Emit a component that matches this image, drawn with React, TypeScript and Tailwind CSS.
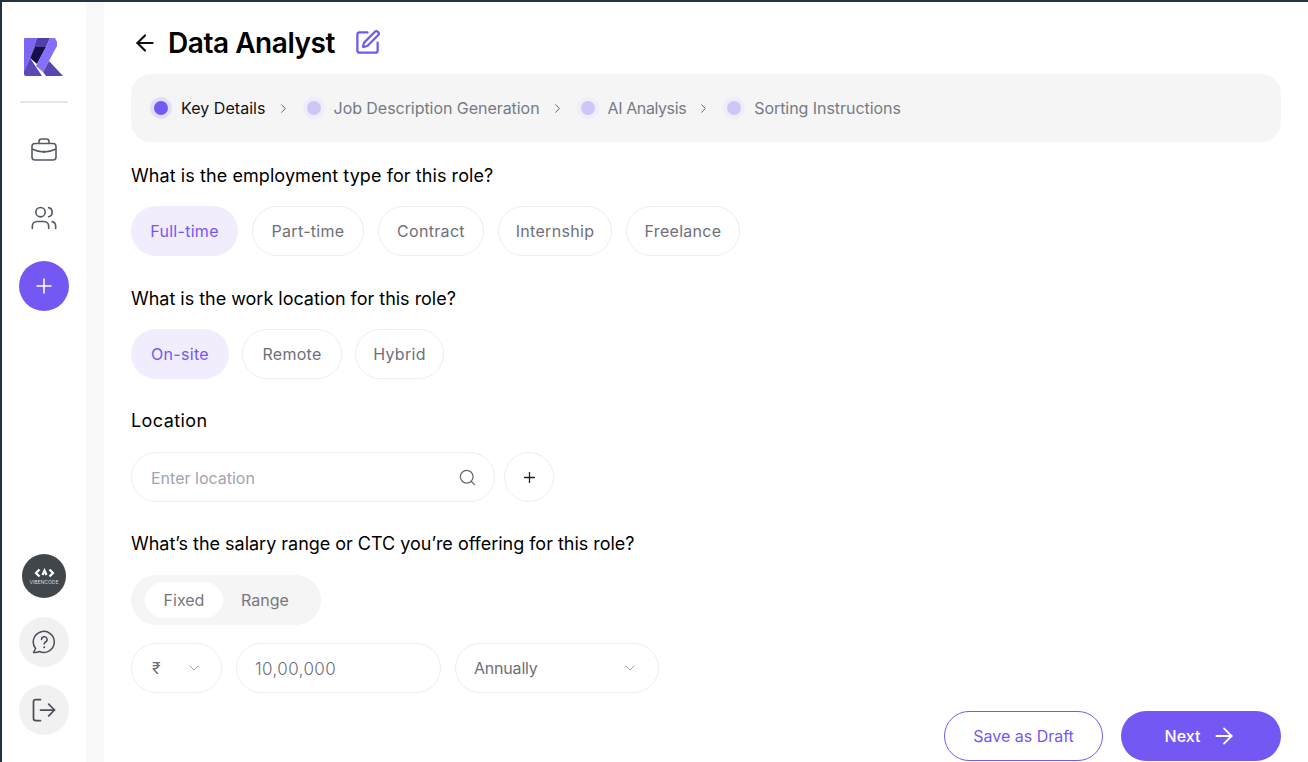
import { ArrowLeft, ArrowRight, ChevronDown, ChevronRight, LogOut, Plus, Search, SquarePen, Users } from "lucide-react";

const font = { fontFamily: "Inter, sans-serif" };

const steps = [
  { label: "Key Details", tracking: "tracking-[0.05px]" },
  { label: "Job Description Generation", tracking: "tracking-[-0.05px]" },
  { label: "AI Analysis", tracking: "tracking-[-0.4px]" },
  { label: "Sorting Instructions", tracking: "tracking-[-0.05px]" },
];

function Logo() {
  return (
    <svg width="40" height="39" viewBox="0 0 40 39">
      <path d="M1 0H13L6 20L0 33V1Q0 0 1 0Z" fill="#7C66F5" />
      <path d="M13 0H26L22 9H11L6 20Z" fill="#4F3FA8" />
      <path d="M11 9H22L13 26L6 20Z" fill="#15104A" />
      <path d="M26 0H31L33 4V8L19 34L12 28L22 9Z" fill="#8470FA" />
      <path d="M0 33L6 20L18 38H2Q0 38 0 36Z" fill="#5A48B8" />
      <path d="M25 23L39 38H22L19 34Z" fill="#5546B0" />
    </svg>
  );
}

function Pill({ label, active, width }: { label: string; active?: boolean; width: string }) {
  return (
    <div
      className={`h-[50px] flex items-center justify-center rounded-full text-[16px] tracking-[0.3px] ${width} ${
        active ? "bg-[#f1edfd] text-[#7558f3]" : "border border-[#eceef5] text-[#6f6f7b]"
      }`}
    >
      {label}
    </div>
  );
}

function Question({ children, className }: { children: string; className: string }) {
  return <p className={`text-[18px] leading-[24px] text-black ${className}`}>{children}</p>;
}

export default function App() {
  return (
    <div style={font} className="h-[762px] w-[1308px] flex overflow-hidden bg-white border-l-2 border-t-2 border-[#27323f]">
      <aside className="w-[84px] shrink-0 flex flex-col items-center bg-white">
        <div className="mt-[36px] mr-[1px]">
          <Logo />
        </div>
        <div className="mt-[24px] w-[48px] h-[2px] bg-[#e4e5f1]" />
        <svg className="mt-[35px]" width="26" height="24" viewBox="0 0 26 24" fill="none" stroke="#555a66" strokeWidth="1.6">
          <rect x="1" y="5.5" width="24" height="16.5" rx="3" />
          <path d="M8 5.5V3.5Q8 1 10.5 1H15.5Q18 1 18 3.5V5.5" />
          <path d="M1 11Q13 17 25 11" />
          <path d="M13 13.6V14" strokeWidth="2" strokeLinecap="round" />
        </svg>
        <Users className="mt-[42px]" size={28} strokeWidth={1.4} color="#555a66" />
        <div className="mt-[29px] w-[50px] h-[50px] rounded-full bg-[#7558f3] flex items-center justify-center">
          <Plus size={24} strokeWidth={1.6} color="#fff" />
        </div>
        <div className="mt-auto w-[44px] h-[44px] rounded-full bg-[#41464b] flex flex-col items-center justify-center text-white">
          <svg width="21" height="10" viewBox="0 0 21 10" fill="none" stroke="#fff" strokeWidth="2.2">
            <path d="M5.5 1.5L2 5L5.5 8.5M15.5 1.5L19 5L15.5 8.5M8.5 7L10.5 2.5L12.5 7" />
          </svg>
          <span className="text-[5px] leading-[6px] mt-[1px] tracking-[0px] text-[#d8d8d8]">VIBENCODE</span>
        </div>
        <div className="mt-[19px] w-[50px] h-[50px] rounded-full bg-[#f1f1f1] flex items-center justify-center">
          <svg width="24" height="24" viewBox="0 0 24 24" fill="none" stroke="#4b4f5c" strokeWidth="1.5" strokeLinecap="round" strokeLinejoin="round">
            <path d="M3 22.5H1.5L3.6 18.5A10.5 10.5 0 1 1 7.5 21.5Q5 22.5 3 22.5Z" />
            <path d="M9.5 9.5A2.8 2.8 0 1 1 13.5 12Q12.2 12.8 12.2 14" />
            <path d="M12.2 17.2V17.3" strokeWidth="2" />
          </svg>
        </div>
        <div className="mt-[18px] mb-[27px] w-[50px] h-[50px] rounded-full bg-[#f1f1f1] flex items-center justify-center">
          <LogOut size={28} strokeWidth={1.5} color="#4b4f5c" />
        </div>
      </aside>
      <div className="w-[18px] shrink-0 bg-[#f8f9fb]" />
      <main className="flex-1 px-[27px]">
        <div className="h-[72px] flex items-center pt-[10px]">
          <ArrowLeft size={26} strokeWidth={2} color="#111" className="ml-[1px]" />
          <h1 className="ml-[10px] text-[28px] leading-[36px] font-semibold tracking-[-0.45px] text-black">Data Analyst</h1>
          <SquarePen size={27} strokeWidth={2} color="#7558f3" className="ml-[19px] mb-[2px]" />
        </div>
        <div className="h-[68px] rounded-[20px] bg-[#f5f5f5] flex items-center pl-[19px] pr-[18px] text-[16px]">
          {steps.map((step, i) => (
            <div key={step.label} className="flex items-center">
              <span className={`w-[22px] h-[22px] rounded-full flex items-center justify-center ${i === 0 ? "bg-[#e3defb]" : "bg-[#efedf9]"}`}>
                <span className={`w-[14px] h-[14px] rounded-full ${i === 0 ? "bg-[#7558f3]" : "bg-[#cfc6f6]"}`} />
              </span>
              <span className={`ml-[9px] ${step.tracking} ${i === 0 ? "text-[#111]" : "text-[#777a86]"}`}>{step.label}</span>
              {i < 3 && <ChevronRight size={15} strokeWidth={1.6} color="#666" className="ml-[10px] mr-[12px]" />}
            </div>
          ))}
        </div>
        <Question className="mt-[22px] tracking-[0.08px]">What is the employment type for this role?</Question>
        <div className="mt-[18px] flex gap-[14px]">
          <Pill label="Full-time" active width="w-[107px]" />
          <Pill label="Part-time" width="w-[112px]" />
          <Pill label="Contract" width="w-[106px]" />
          <Pill label="Internship" width="w-[114px]" />
          <Pill label="Freelance" width="w-[114px]" />
        </div>
        <Question className="mt-[31px] tracking-[-0.02px]">What is the work location for this role?</Question>
        <div className="mt-[18px] flex gap-[13px]">
          <Pill label="On-site" active width="w-[98px]" />
          <Pill label="Remote" width="w-[100px]" />
          <Pill label="Hybrid" width="w-[89px]" />
        </div>
        <Question className="mt-[30px] tracking-[0.4px]">Location</Question>
        <div className="mt-[19px] flex gap-[9px]">
          <div className="w-[364px] h-[50px] rounded-full border border-[#eceef5] flex items-center justify-between pl-[19px] pr-[17px] text-[16px] text-[#a2a3b0]">
            <span className="mt-[1px]">Enter location</span>
            <Search size={19} strokeWidth={1.6} color="#666a75" />
          </div>
          <div className="w-[50px] h-[50px] rounded-full border border-[#eceef5] flex items-center justify-center">
            <Plus size={17} strokeWidth={1.8} color="#222" />
          </div>
        </div>
        <Question className="mt-[30px] tracking-[-0.02px]">What’s the salary range or CTC you’re offering for this role?</Question>
        <div className="mt-[19px] w-[190px] h-[50px] rounded-full bg-[#f5f5f5] flex items-center pl-[14px] text-[16px] text-[#77777f]">
          <div className="w-[78px] h-[36px] rounded-full bg-white flex items-center justify-center">Fixed</div>
          <span className="ml-[18px]">Range</span>
        </div>
        <div className="mt-[18px] flex gap-[14px] text-[16px] text-[#6f6f7b]">
          <div className="w-[91px] h-[50px] rounded-full border border-[#eceef5] flex items-center justify-between pl-[20px] pr-[19px]">
            ₹
            <ChevronDown size={16} strokeWidth={1.5} color="#9a9aa5" />
          </div>
          <div className="w-[205px] h-[50px] rounded-full border border-[#eceef5] flex items-center pl-[18px] pt-[3px] text-[17px] font-light tracking-[0.4px]">10,00,000</div>
          <div className="w-[204px] h-[50px] rounded-full border border-[#eceef5] flex items-center justify-between pl-[18px] pr-[20px] tracking-[-0.2px]">
            Annually
            <ChevronDown size={16} strokeWidth={1.5} color="#9a9aa5" />
          </div>
        </div>
        <div className="mt-[18px] flex justify-end gap-[18px] text-[16px]">
          <div className="w-[159px] h-[50px] rounded-full border border-[#7558f3] text-[#7558f3] flex items-center justify-center">Save as Draft</div>
          <div className="w-[160px] h-[50px] rounded-full bg-[#7558f3] text-white font-medium flex items-center justify-center gap-[11px]">
            Next
            <ArrowRight size={26} strokeWidth={1.7} />
          </div>
        </div>
      </main>
    </div>
  );
}
